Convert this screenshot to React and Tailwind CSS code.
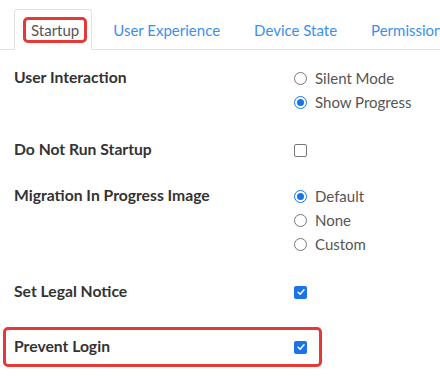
import React from 'react';

// 라디오 버튼 모양
function Radio({ checked }) {
  return checked ? (
    <span className="w-[13px] h-[13px] rounded-full border-[1.5px] border-[#1a73e8] flex items-center justify-center shrink-0">
      <span className="w-[7px] h-[7px] rounded-full bg-[#1a73e8]" />
    </span>
  ) : (
    <span className="w-[13px] h-[13px] rounded-full border border-[#777] shrink-0" />
  );
}

// 체크박스 모양
function Checkbox({ checked }) {
  return checked ? (
    <span className="w-[13px] h-[13px] rounded-[2px] bg-[#1a73e8] flex items-center justify-center">
      <svg viewBox="0 0 12 12" className="w-[10px] h-[10px]">
        <path d="M2.5 6.3 L5 8.6 L9.6 3.4" fill="none" stroke="white" strokeWidth="1.8" strokeLinecap="round" strokeLinejoin="round" />
      </svg>
    </span>
  ) : (
    <span className="w-[13px] h-[13px] rounded-[2px] border border-[#777]" />
  );
}

function Options({ items }) {
  return (
    <div className="flex flex-col">
      {items.map((it) => (
        <div key={it.label} className="flex items-center gap-[8px] h-[24px] text-[#555]">
          <Radio checked={it.checked} />
          <span>{it.label}</span>
        </div>
      ))}
    </div>
  );
}

function Row({ label, children, className = '' }) {
  return (
    <div className={`flex ${className}`}>
      <div className="w-[280px] h-[24px] flex items-center font-bold text-[15.7px] text-[#333]">{label}</div>
      <div className="flex flex-col">{children}</div>
    </div>
  );
}

export default function App() {
  const tabs = ['User Experience', 'Device State', 'Permissions'];

  return (
    <div className="w-[440px] h-[376px] overflow-hidden bg-white text-[15px]" style={{ fontFamily: 'Lato, sans-serif' }}>
      {/* 탭 영역 */}
      <div className="flex items-end pt-[9px] pl-[14px] border-b border-[#e2e2e2] h-[50px] whitespace-nowrap">
        <div className="h-[41px] -mb-px bg-white border border-[#e2e2e2] border-b-white rounded-t-[3px] pl-[8px] pr-[4px] pt-[7px]">
          <div className="h-[26px] border-[3px] border-[#e53935] rounded-[5px] px-[5px] pt-[1px] flex items-center text-[#555]">
            Startup
          </div>
        </div>
        <div className="flex h-[41px] items-center pl-[4px] pt-[3px]">
          {tabs.map((t) => (
            <div key={t} className="px-[17px] text-[#3b8ff0]">{t}</div>
          ))}
        </div>
      </div>

      {/* 설정 항목 */}
      <div className="px-[14px] pt-[16px]">
        <Row label="User Interaction">
          <Options items={[{ label: 'Silent Mode' }, { label: 'Show Progress', checked: true }]} />
        </Row>
        <Row label="Do Not Run Startup" className="mt-[24px]">
          <div className="h-[24px] flex items-center"><Checkbox /></div>
        </Row>
        <Row label="Migration In Progress Image" className="mt-[22px]">
          <Options items={[{ label: 'Default', checked: true }, { label: 'None' }, { label: 'Custom' }]} />
        </Row>
        <Row label="Set Legal Notice" className="mt-[24px]">
          <div className="h-[24px] flex items-center"><Checkbox checked /></div>
        </Row>
      </div>
      <div className="mt-[23px] ml-[3px] w-[319px] h-[40px] border-[3px] border-[#e53935] rounded-[5px] pl-[8px] flex items-center">
        <div className="w-[280px] font-bold text-[15.7px] text-[#333]">Prevent Login</div>
        <Checkbox checked />
      </div>
    </div>
  );
}
